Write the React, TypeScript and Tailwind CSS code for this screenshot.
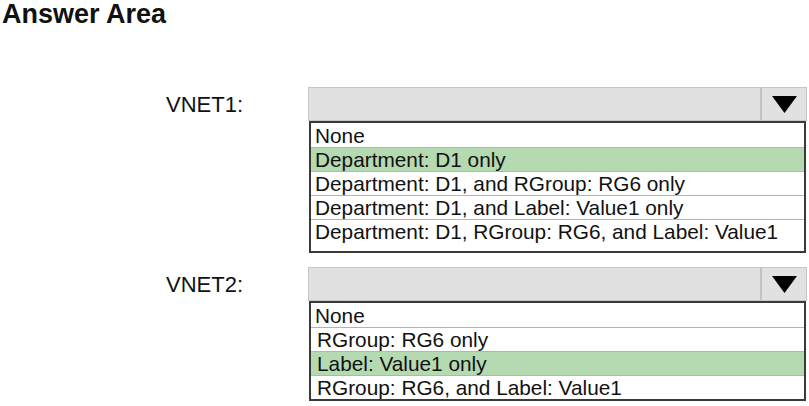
import React from 'react';

type Option = { text: string; selected?: boolean; indent?: boolean };

const VNET1: Option[] = [
  { text: 'None' },
  { text: 'Department: D1 only', selected: true },
  { text: 'Department: D1, and RGroup: RG6 only' },
  { text: 'Department: D1, and Label: Value1 only' },
  { text: 'Department: D1, RGroup: RG6, and Label: Value1' },
];

const VNET2: Option[] = [
  { text: 'None' },
  { text: 'RGroup: RG6 only', indent: true },
  { text: 'Label: Value1 only', selected: true, indent: true },
  { text: 'RGroup: RG6, and Label: Value1', indent: true },
];

function Dropdown({ label, options, extraBottom }: { label: string; options: Option[]; extraBottom?: boolean }) {
  return (
    <div className="flex pl-[166px]">
      <div className="w-[142px] h-[34px] flex items-center text-[22px] text-[#111]">{label}</div>
      <div className="w-[499px]">
        {/* header */}
        <div className="h-[34px] flex border border-[#c6c6c6] bg-[#e1e1e1]">
          <div className="flex-1" />
          <div className="w-[46px] border-l-2 border-[#c3c3c3] flex items-center justify-center">
            <svg width="25" height="17" viewBox="0 0 25 17">
              <polygon points="0,0 25,0 12.5,17" fill="#000" />
            </svg>
          </div>
        </div>
        {/* list */}
        <div className={`w-[497px] ml-[1px] border-2 border-[#3a3a3a] bg-white ${extraBottom ? 'pb-[8px]' : ''}`}>
          {options.map((o, i) => (
            <div
              key={i}
              className={`h-[24px] flex items-center pt-[2px] pr-[4px] ${o.indent ? 'pl-[6px]' : 'pl-[4px]'} whitespace-pre text-[20.8px] leading-none text-[#111] ${
                i > 0 ? 'border-t border-[#b4b4b4]' : ''
              } ${o.selected ? 'bg-[#b5d9b1]' : ''}`}
            >
              {o.text}
            </div>
          ))}
        </div>
      </div>
    </div>
  );
}

export default function App() {
  return (
    <div className="w-[809px] h-[406px] bg-white overflow-hidden font-['Liberation_Sans',Arial,sans-serif]">
      <h1 className="pl-[2px] text-[27px] leading-[29px] font-bold text-[#111]">Answer Area</h1>
      <div className="mt-[58px] flex flex-col gap-[14px]">
        <Dropdown label="VNET1:" options={VNET1} extraBottom />
        <Dropdown label="VNET2:" options={VNET2} />
      </div>
    </div>
  );
}
